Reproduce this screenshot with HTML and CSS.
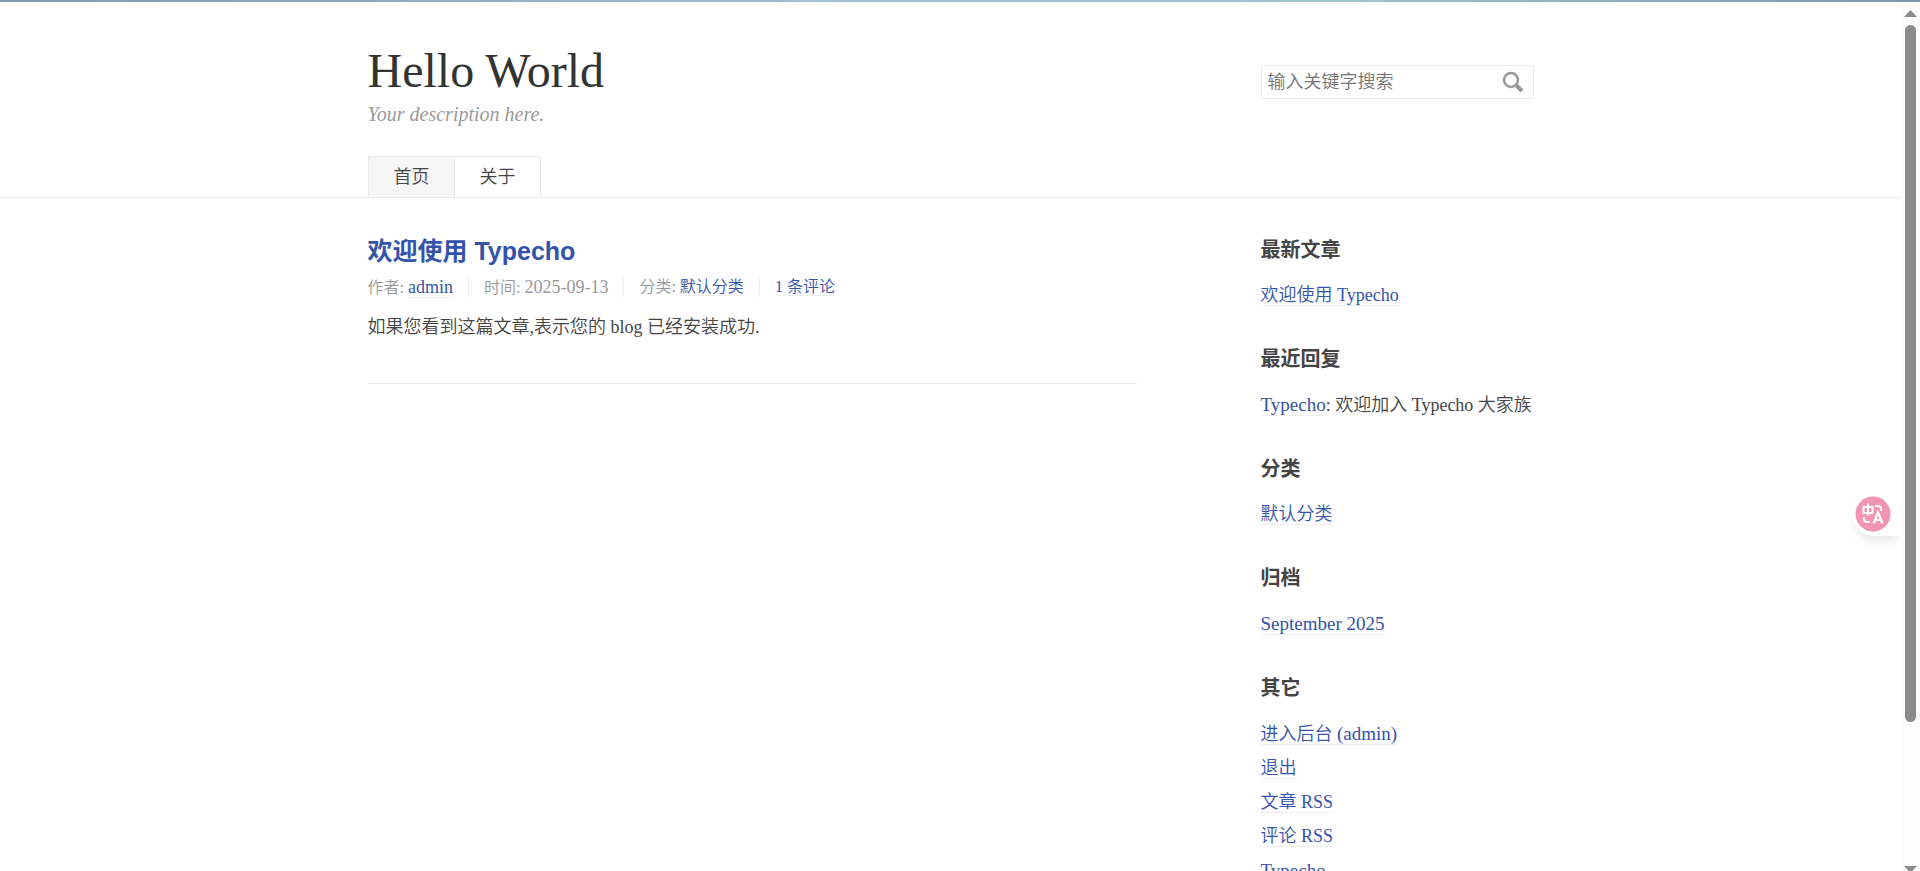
FILE: index.html
```html
<!DOCTYPE html>
<html lang="zh-CN">
<head>
<meta charset="utf-8">
<title>Hello World</title>
<link rel="stylesheet" href="styles.css">
</head>
<body>
<div class="window-edge"></div>
<div class="viewport">
  <div class="page">
    <header class="site-header">
      <div class="container">
        <div class="masthead">
          <div>
            <h1 class="site-name"><a href="#">Hello World</a></h1>
            <p class="description">Your description here.</p>
          </div>
          <form class="search">
            <input type="text" aria-label="搜索关键字" placeholder="输入关键字搜索">
            <button type="button" aria-label="搜索">
              <svg width="22" height="22" viewBox="0 0 22 22" fill="none" stroke="#999"><circle cx="9" cy="9" r="7" stroke-width="2.5"/><path d="M14 14l6 6" stroke-width="4"/></svg>
            </button>
          </form>
        </div>
        <nav class="site-nav"><a class="current" href="#">首页</a><a href="#">关于</a></nav>
      </div>
    </header>
    <div class="container columns">
      <main>
        <article class="post">
          <h2><a href="#">欢迎使用 Typecho</a></h2>
          <ul class="meta">
            <li>作者: <a class="latin" href="#">admin</a></li>
            <li>时间: <time class="latin">2025-09-13</time></li>
            <li>分类: <a href="#">默认分类</a></li>
            <li><a href="#">1 条评论</a></li>
          </ul>
          <p>如果您看到这篇文章,表示您的 blog 已经安装成功.</p>
        </article>
      </main>
      <aside>
        <section><h3>最新文章</h3><ul><li><a href="#">欢迎使用 Typecho</a></li></ul></section>
        <section><h3>最近回复</h3><ul><li><a class="latin" href="#">Typecho</a>: 欢迎加入 Typecho 大家族</li></ul></section>
        <section><h3>分类</h3><ul><li><a href="#">默认分类</a></li></ul></section>
        <section><h3>归档</h3><ul><li><a class="latin" href="#">September 2025</a></li></ul></section>
        <section><h3>其它</h3><ul>
          <li><a href="#">进入后台 <span class="latin">(admin)</span></a></li>
          <li><a href="#">退出</a></li>
          <li><a href="#">文章 RSS</a></li>
          <li><a href="#">评论 RSS</a></li>
          <li><a class="latin" href="#">Typecho</a></li>
        </ul></section>
      </aside>
    </div>
  </div>
  <div class="scrollbar">
    <svg width="13" height="7" viewBox="0 0 13 7"><path d="M6.500 0L13 7H0z" fill="#8b8b8b"/></svg>
    <div class="thumb"></div>
    <svg width="13" height="5" viewBox="0 0 13 5"><path d="M0 0h13L6.500 7z" fill="#8b8b8b"/></svg>
  </div>
</div>
<button class="translate" type="button" aria-label="翻译">
  <svg width="36" height="36" viewBox="0 0 36 36"><circle cx="18" cy="18" r="17.500" fill="#f295b1"/><g fill="none" stroke="#fff" stroke-width="2"><path d="M8.500 11h9v6h-9zM13 7.500v12M20 10h3q3 0 3 3v2M9 21v2q0 3 3 3h3"/><path d="M18.500 27.500L23 16.500l4.500 11M20 24h6" stroke-width="2.200"/></g></svg>
</button>
</body>
</html>
```
FILE: styles.css
```css
* { box-sizing: border-box; }

body {
  margin: 0;
  height: 100vh;
  overflow: hidden;
  display: flex;
  flex-direction: column;
  background: #fff;
  color: #444;
  font: 350 18px/27px "Liberation Serif", "Noto Sans CJK SC", serif;
}

h1, h2, h3, p, ul { margin: 0; padding: 0; }
ul { list-style: none; }
a { color: #3354aa; text-decoration: none; }

.window-edge {
  flex: none;
  height: 2px;
  background: linear-gradient(90deg, #8199ab, #a5bfd4 45%, #9fc3cf 70%, #7d96a8);
}

.viewport { flex: 1; min-height: 0; display: flex; }
.page { flex: 1; overflow: hidden; }

.container {
  max-width: 1206px;
  margin: 0 auto;
  padding: 0 20px;
}

.site-header { padding-top: 39px; border-bottom: 1px solid #ebebeb; }
.masthead { display: flex; justify-content: space-between; }
.site-name { font-size: 48px; line-height: 60px; font-weight: 400; }
.site-name a { color: #333; }
.description { color: #999; font-size: 20px; font-style: italic; line-height: 27px; }

.search {
  display: flex;
  align-items: center;
  width: 273px;
  height: 34px;
  margin-top: 24px;
  padding: 0 9px 0 6px;
  border: 1px solid #e9e9e9;
  border-radius: 2px;
}
.search input {
  flex: 1;
  min-width: 0;
  padding: 0;
  border: 0;
  outline: 0;
  background: none;
  font: inherit;
}
.search input::placeholder { color: #757575; }
.search button { display: flex; padding: 0; border: 0; background: none; }

.site-nav { display: flex; margin-top: 28px; }
.site-nav a {
  padding: 7px 24px 6px 25px;
  border: 1px solid #e9e9e9;
  border-bottom: 0;
  color: #444;
}
.site-nav a + a { border-left: 0; }
.site-nav .current { background: #f6f6f6; }

.columns { display: flex; justify-content: space-between; }
main { flex: 0 0 66%; }
aside { flex: 0 0 273px; padding-top: 38px; }

.post { padding: 37px 0 42px; border-bottom: 1px solid #ebebeb; }
.post h2 {
  font: 700 25px/32px "Liberation Sans", "Noto Sans CJK SC", sans-serif;
}
.post p { margin-top: 17px; }

.meta { display: flex; margin-top: 11px; color: #999; font-size: 16px; line-height: 18px; }
.meta li + li { margin-left: 15px; padding-left: 15px; border-left: 1px solid #eee; }
.meta .latin { font-size: 18px; }
.meta a, aside a { border-bottom: 1px solid #eee; }
.latin { font-size: 19px; }

aside section { margin-bottom: 36px; }
aside h3 {
  font: 700 20px/28px "Liberation Sans", "Noto Sans CJK SC", sans-serif;
  margin-bottom: 18px;
}
aside li { line-height: 27px; white-space: nowrap; }
aside li + li { margin-top: 7px; }

.scrollbar {
  flex: 0 0 19px;
  display: flex;
  flex-direction: column;
  align-items: center;
  justify-content: space-between;
  padding-top: 8px;
  background: #fcfcfc;
}
.scrollbar svg { flex: none; display: block; }
.thumb { width: 11px; height: 81%; margin: 8px 0 auto; border-radius: 6px; background: #8b8b8b; }

.translate {
  position: fixed;
  right: 19px;
  top: 55%;
  display: flex;
  padding: 17px 10px 4px 4px;
  border: 0;
  border-radius: 24px 0 0 24px;
  background: #fff;
  box-shadow: 0 8px 10px -4px #e4e4e4;
}
```
